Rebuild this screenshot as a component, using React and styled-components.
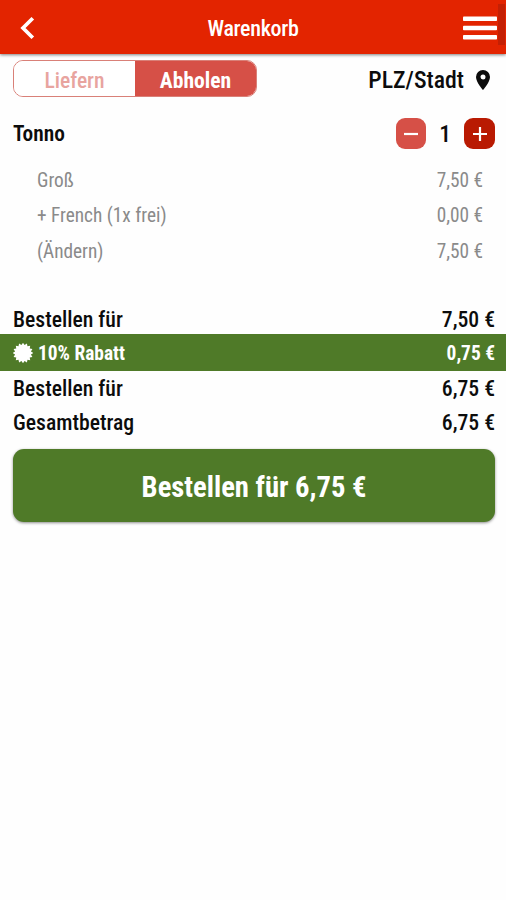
import React from "react";
import styled, { createGlobalStyle } from "styled-components";

const GlobalStyle = createGlobalStyle`
  *, *::before, *::after { box-sizing: border-box; }
  body {
    margin: 0;
    background: #fefefe;
    color: #0c0c0c;
    font-family: "Roboto Condensed", Roboto, sans-serif;
  }
  button {
    border: 0;
    padding: 0;
    background: none;
    color: inherit;
    font: inherit;
  }
  svg { display: block; }
`;

const Page = styled.div`
  min-height: 900px;
  overflow: hidden;
`;

const AppBar = styled.header`
  display: grid;
  grid-template-columns: 60px 1fr 60px;
  align-items: center;
  height: 54px;
  padding-top: 2px;
  background: #e32400;
  color: #fff;
  box-shadow: 0 1px 3px rgba(0, 0, 0, 0.5);
  position: relative;
`;

const BackButton = styled.button`
  margin-left: 20px;
  width: 16px;
`;

const Title = styled.h1`
  margin: 0;
  padding-top: 2px;
  text-align: center;
  font-size: 22px;
  line-height: 26px;
  font-weight: 500;
  letter-spacing: -0.3px;
`;

const MenuButton = styled.button`
  margin-left: 17px;
  width: 34px;
`;

const ScrollThumb = styled.div`
  position: absolute;
  top: 4px;
  right: 1px;
  width: 7px;
  height: 41px;
  background: #c42004;
`;

const Toolbar = styled.div`
  display: flex;
  justify-content: space-between;
  align-items: center;
  height: 37px;
  margin: 6px 13px 0;
`;

const Segmented = styled.div`
  display: flex;
  width: 244px;
  height: 37px;
  border: 1px solid #d98078;
  border-radius: 10px;
  overflow: hidden;
`;

const Segment = styled.button`
  flex: ${(p) => (p.$active ? "0 0 121px" : "1")};
  padding-top: 3px;
  font-size: 21.6px;
  font-weight: ${(p) => (p.$active ? 700 : 500)};
  color: ${(p) => (p.$active ? "#fff" : "#e8a49f")};
  background: ${(p) => (p.$active ? "#d65047" : "#fff")};
`;

const Location = styled.button`
  display: flex;
  align-items: center;
  gap: 12px;
  padding: 2px 3px 0 0;
  font-size: 23.8px;
  line-height: 28px;
  font-weight: 500;
`;

const ItemHeader = styled.div`
  display: flex;
  justify-content: space-between;
  align-items: center;
  height: 31px;
  margin: 21px 11px 0 13px;
`;

const ItemName = styled.h2`
  margin: 0;
  font-size: 21.4px;
  line-height: 26px;
  font-weight: 600;
`;

const Stepper = styled.div`
  display: flex;
  align-items: center;
`;

const StepButton = styled.button`
  display: grid;
  place-items: center;
  width: ${(p) => p.$width}px;
  height: 31px;
  border-radius: 9px;
  background: ${(p) => p.$color};
`;

const Quantity = styled.span`
  width: 38px;
  padding-top: 1px;
  text-align: center;
  font-size: 23.5px;
  line-height: 28px;
  font-weight: 500;
`;

const Options = styled.ul`
  list-style: none;
  margin: 14px 23px 0 37px;
  padding: 0;
`;

const Option = styled.li`
  display: flex;
  justify-content: space-between;
  align-items: center;
  height: 35.3px;
  font-size: 19.3px;
  font-weight: 400;
  color: #8a8a8a;
`;

const Summary = styled.section`
  margin-top: 32px;
`;

const SummaryRow = styled.div`
  display: flex;
  justify-content: space-between;
  align-items: center;
  height: ${(p) => p.$height}px;
  padding: ${(p) => p.$drop || 0}px 11px 0 13px;
  font-size: 21.7px;
  font-weight: 500;
`;

const DiscountRow = styled(SummaryRow)`
  background: #4f7a28;
  color: #fff;
  font-size: 19.4px;
  font-weight: 700;
`;

const DiscountLabel = styled.span`
  display: flex;
  align-items: center;
  gap: 5px;
`;

const OrderButton = styled.button`
  display: block;
  width: 482px;
  height: 73px;
  margin: 10px 0 0 13px;
  padding-top: 4px;
  border-radius: 11px;
  background: #4f7a28;
  box-shadow: 0 1px 3px rgba(0, 0, 0, 0.45);
  color: #fff;
  font-size: 28.6px;
  font-weight: 700;
`;

const BackIcon = () => (
  <svg width="16" height="22" viewBox="0 0 16 22" fill="none" stroke="#fff" strokeWidth="3.7">
    <path d="M12.8 1.3 3 11l9.8 9.7" />
  </svg>
);

const MenuIcon = () => (
  <svg width="34" height="24" viewBox="0 0 34 24" fill="#fff">
    <rect y="0.5" width="34" height="4.6" rx="0.8" />
    <rect y="9.7" width="34" height="4.6" rx="0.8" />
    <rect y="18.9" width="34" height="4.6" rx="0.8" />
  </svg>
);

const PinIcon = () => (
  <svg width="14" height="20" viewBox="0 0 14 20">
    <path
      fillRule="evenodd"
      fill="#0c0c0c"
      d="M7 0a7 7 0 0 0-7 7c0 5.2 7 13 7 13s7-7.800 7-13a7 7 0 0 0-7-7zm0 4.500a2.500 2.500 0 1 1 0 5 2.500 2.500 0 0 1 0-5z"
    />
  </svg>
);

const StepIcon = ({ plus }) => (
  <svg width="14" height="14" viewBox="0 0 14 14" stroke="#fff" strokeWidth="2.2">
    <path d={plus ? "M0 7h14M7 0v14" : "M0 7h14"} />
  </svg>
);

const sealPoints = Array.from({ length: 32 }, (_, i) => {
  const radius = i % 2 ? 8.1 : 10.2;
  const angle = (i * Math.PI) / 16;
  return `${(10 + radius * Math.cos(angle)).toFixed(2)},${(10 + radius * Math.sin(angle)).toFixed(2)}`;
}).join(" ");

const SealIcon = () => (
  <svg width="20" height="20" viewBox="0 0 20 20" fill="#fff">
    <polygon points={sealPoints} />
  </svg>
);

const options = [
  ["Groß", "7,50 €"],
  ["+ French (1x frei)", "0,00 €"],
  ["(Ändern)", "7,50 €"],
];

export default function App() {
  return (
    <Page>
      <GlobalStyle />
      <AppBar>
        <BackButton aria-label="Zurück"><BackIcon /></BackButton>
        <Title>Warenkorb</Title>
        <MenuButton aria-label="Menü"><MenuIcon /></MenuButton>
        <ScrollThumb />
      </AppBar>
      <Toolbar>
        <Segmented>
          <Segment>Liefern</Segment>
          <Segment $active>Abholen</Segment>
        </Segmented>
        <Location>PLZ/Stadt <PinIcon /></Location>
      </Toolbar>
      <ItemHeader>
        <ItemName>Tonno</ItemName>
        <Stepper>
          <StepButton $width={30} $color="#d65047" aria-label="Weniger"><StepIcon /></StepButton>
          <Quantity>1</Quantity>
          <StepButton $width={31} $color="#b91a02" aria-label="Mehr"><StepIcon plus /></StepButton>
        </Stepper>
      </ItemHeader>
      <Options>
        {options.map(([name, price]) => (
          <Option key={name}><span>{name}</span><span>{price}</span></Option>
        ))}
      </Options>
      <Summary>
        <SummaryRow $height={33} $drop={4}><span>Bestellen für</span><span>7,50 €</span></SummaryRow>
        <DiscountRow $height={37} $drop={2}>
          <DiscountLabel><SealIcon />10% Rabatt</DiscountLabel>
          <span>0,75 €</span>
        </DiscountRow>
        <SummaryRow $height={35} $drop={1}><span>Bestellen für</span><span>6,75 €</span></SummaryRow>
        <SummaryRow $height={33}><span>Gesamtbetrag</span><span>6,75 €</span></SummaryRow>
      </Summary>
      <OrderButton>Bestellen für 6,75 €</OrderButton>
    </Page>
  );
}
